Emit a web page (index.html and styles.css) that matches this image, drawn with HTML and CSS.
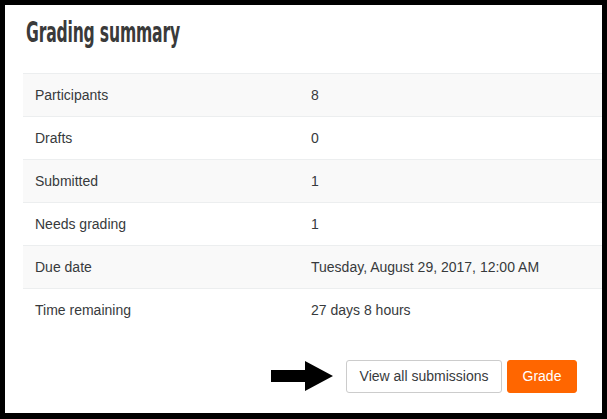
FILE: index.html
```html
<!DOCTYPE html>
<html lang="en">
<head>
    <meta charset="UTF-8">
    <title>Grading summary</title>
    <link rel="stylesheet" href="styles.css">
</head>
<body>
    <div class="frame">
        <h2 class="title">Grading summary</h2>
        <table class="summary">
            <tr><td class="label">Participants</td><td>8</td></tr>
            <tr><td class="label">Drafts</td><td>0</td></tr>
            <tr><td class="label">Submitted</td><td>1</td></tr>
            <tr><td class="label">Needs grading</td><td>1</td></tr>
            <tr><td class="label">Due date</td><td>Tuesday, August 29, 2017, 12:00 AM</td></tr>
            <tr><td class="label">Time remaining</td><td>27 days 8 hours</td></tr>
        </table>
        <div class="actions">
            <svg class="arrow" width="62" height="30" viewBox="0 0 62 30"><path d="M0 9H34V0L62 15L34 30V21H0Z" fill="#000"/></svg>
            <button class="btn btn-light">View all submissions</button>
            <button class="btn btn-orange">Grade</button>
        </div>
    </div>
</body>
</html>
```

FILE: styles.css
```css
*{
    padding:0;margin:0;
    box-sizing:border-box;
}
body{
    background:#000;
    font-family:"Liberation Sans",Arial,sans-serif;
    color:#373a3c;
}
.frame{
    height:419px;
    border:solid #000;
    border-width:5px 5px 6px 5px;
    background:#fff;
    padding:10px 0 0 18px;
}
.title{
    display:inline-block;
    font-family:"DejaVu Sans Condensed","DejaVu Sans",sans-serif;
    font-stretch:condensed;
    font-weight:bold;
    font-size:28px;
    line-height:36px;
    letter-spacing:-0.3px;
    color:#3a3a3a;
    margin-left:3px;
    transform:scaleX(0.62);
    transform-origin:left center;
}
.summary{
    width:100%;
    margin-top:22px;
    border-collapse:collapse;
    font-size:14px;
}
.summary td{
    height:43px;
    padding:0 12px;
    border-top:1px solid #eceeef;
    vertical-align:middle;
}
.summary td.label{width:276px;}
.summary tr:nth-child(odd){background:#f9f9f9;}
.actions{
    display:flex;
    justify-content:flex-end;
    align-items:center;
    gap:5px;
    margin-top:28px;
    padding-right:25px;
}
.arrow{margin-right:8px;}
.btn{
    height:33px;
    padding:0 10px;
    white-space:nowrap;
    font-family:"Liberation Sans",Arial,sans-serif;
    font-size:14px;
    border-radius:3px;
    cursor:pointer;
}
.btn-light{
    width:156px;
    background:#fff;
    border:1px solid #ccc;
    color:#373a3c;
}
.btn-orange{
    width:70px;
    background:#ff6600;
    border:1px solid #ff6600;
    color:#fff;
}
```
